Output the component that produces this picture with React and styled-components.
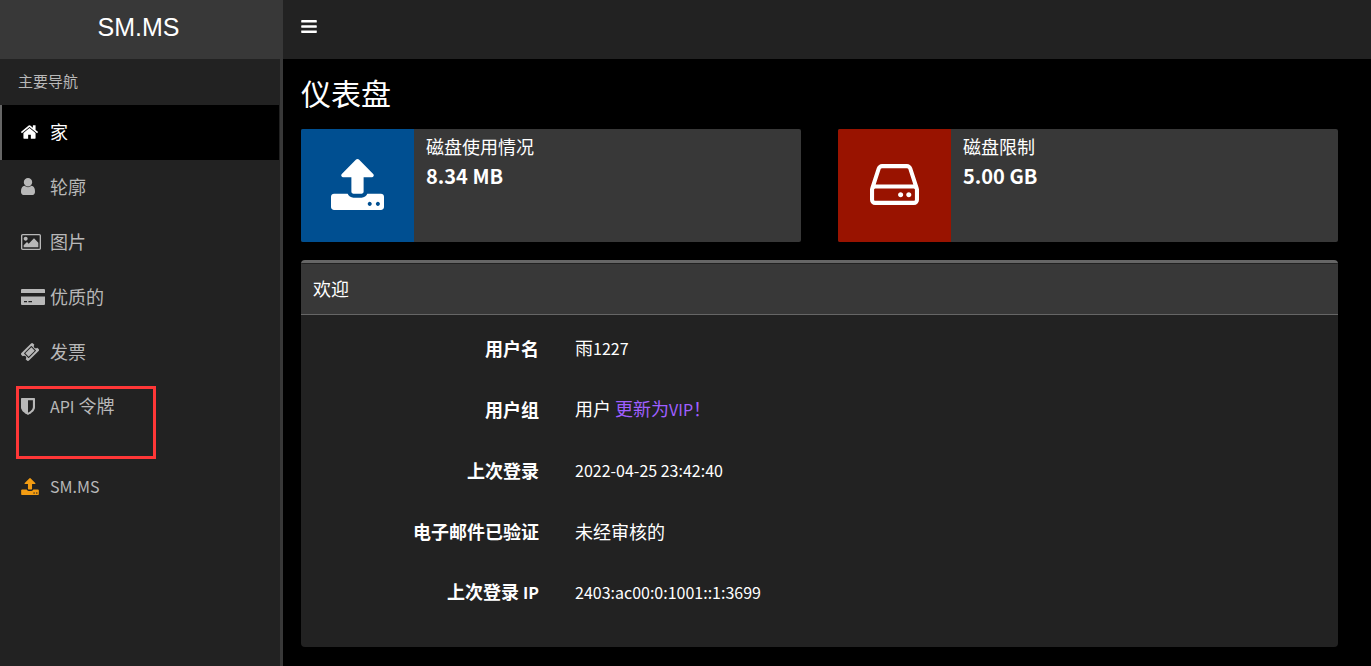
import React from "react";
import styled, { createGlobalStyle } from "styled-components";

const GlobalStyle = createGlobalStyle`
  * { box-sizing: border-box; }
  body {
    margin: 0;
    background: #000;
    color: #fff;
    font-family: "Noto Sans CJK SC", sans-serif;
    font-size: 18px;
    line-height: 26px;
  }
  h1, h2, p, ul, dl, dd { margin: 0; padding: 0; }
`;

const Page = styled.div`
  display: flex;
  flex-direction: column;
  min-height: 100vh;
`;

const Header = styled.header`
  display: flex;
  height: 59px;
  background: #222;
`;

const Logo = styled.a`
  width: 283px;
  padding: 0 24px 0 18px;
  background: #383838;
  color: #fff;
  font-family: "Liberation Sans", Arial, sans-serif;
  font-size: 25px;
  line-height: 55px;
  text-align: center;
  text-decoration: none;
`;

const MenuButton = styled.button`
  display: flex;
  align-items: center;
  padding: 0 18px 6px;
  border: 0;
  background: none;
  color: #fff;
  cursor: pointer;
`;

const Body = styled.div`
  display: flex;
  flex: 1;
`;

const Sidebar = styled.nav`
  width: 283px;
  flex-shrink: 0;
  border-right: 3px solid #383838;
  background: #222;
`;

const NavHeading = styled.h2`
  padding: 9px 18px 11px;
  color: #b8b8b8;
  font-size: 15px;
  font-weight: 400;
`;

const NavList = styled.ul`
  list-style: none;
`;

const NavItem = styled.li`
  position: relative;
  margin-top: ${(p) => (p.$spaced ? 25 : 0)}px;
  padding-right: 1px;
`;

const NavLink = styled.a`
  display: flex;
  align-items: center;
  height: 55px;
  padding: 0 0 2px 19px;
  border-left: 2px solid ${(p) => (p.$active ? "#666" : "transparent")};
  background: ${(p) => (p.$active ? "#000" : "transparent")};
  color: ${(p) => (p.$active ? "#fff" : "#b8b8b8")};
  text-decoration: none;
`;

const NavIcon = styled.span`
  display: flex;
  width: 29px;
  color: ${(p) => p.$color || "inherit"};
`;

const NavText = styled.span`
  padding-bottom: 2px;
`;

const Highlight = styled.span`
  position: absolute;
  top: 6px;
  left: 16px;
  width: 140px;
  height: 73px;
  border: 3px solid #ff3737;
  pointer-events: none;
`;

const Latin = styled.span`
  font-size: 16px;
`;

const Main = styled.main`
  flex: 1;
  min-width: 0;
  padding: 12px 33px 19px 18px;
`;

const Title = styled.h1`
  font-size: 30px;
  font-weight: 400;
  line-height: 42px;
`;

const Stats = styled.div`
  display: grid;
  grid-template-columns: 1fr 1fr;
  gap: 37px;
  margin: 16px 0 18px;
`;

const Stat = styled.section`
  display: flex;
  height: 113px;
  overflow: hidden;
  border-radius: 2px;
  background: #383838;
`;

const StatIcon = styled.div`
  display: flex;
  align-items: center;
  justify-content: center;
  width: 113px;
  padding-bottom: 2px;
  background: ${(p) => p.$color};
`;

const StatText = styled.div`
  padding: 4px 12px;
`;

const StatValue = styled.p`
  font-size: 20px;
  font-weight: 700;
  line-height: 34px;
`;

const Panel = styled.section`
  overflow: hidden;
  border-top: 3px solid #666;
  border-radius: 4px;
  background: #222;
`;

const PanelTitle = styled.h2`
  padding: 11px 12px 13px;
  border-top: 1px solid #222;
  border-bottom: 1px solid #666;
  background: #383838;
  font-size: 18px;
  font-weight: 400;
`;

const Details = styled.dl`
  padding: 2px 13px 25px 0;
`;

const Detail = styled.div`
  display: grid;
  grid-template-columns: 1fr 3fr;
  align-items: center;
  height: 61px;
`;

const Label = styled.dt`
  padding-right: 18px;
  font-weight: 700;
  text-align: right;
`;

const Value = styled.dd`
  && { padding-left: 18px; }
`;

const VipLink = styled.a`
  color: #9f5fff;
  text-decoration: none;
`;

const shapes = {
  bars: {
    box: [128, 256, 1536, 1280],
    d: "M1664 1344v128q0 26-19 45t-45 19h-1408q-26 0-45-19t-19-45v-128q0-26 19-45t45-19h1408q26 0 45 19t19 45zm0-512v128q0 26-19 45t-45 19h-1408q-26 0-45-19t-19-45v-128q0-26 19-45t45-19h1408q26 0 45 19t19 45zm0-512v128q0 26-19 45t-45 19h-1408q-26 0-45-19t-19-45v-128q0-26 19-45t45-19h1408q26 0 45 19t19 45z",
  },
  home: {
    box: [89, 253, 1614, 1283],
    d: "M1472 992v480q0 26-19 45t-45 19h-384v-384h-256v384h-384q-26 0-45-19t-19-45v-480q0-1 .5-3t.5-3l575-474 575 474q1 2 1 6zm223-69l-62 74q-8 9-21 11h-3q-13 0-21-7l-692-577-692 577q-12 8-24 7-13-2-21-11l-62-74q-8-10-7-23.5t11-21.5l719-599q32-26 76-26t76 26l244 204v-195q0-14 9-23t23-9h192q14 0 23 9t9 23v408l219 182q10 8 11 21.5t-7 23.5z",
  },
  user: {
    box: [256, 128, 1280, 1536],
    d: "M1536 1399q0 109-62.5 187t-150.5 78h-854q-88 0-150.5-78t-62.5-187q0-85 8.5-160.5t31.5-152 58.5-131 94-89 134.5-34.5q131 128 313 128t313-128q76 0 134.5 34.5t94 89 58.5 131 31.5 152 8.5 160.5zm-256-887q0 159-112.5 271.5t-271.5 112.5-271.5-112.5-112.5-271.5 112.5-271.5 271.5-112.5 271.5 112.5 112.5 271.5z",
  },
  image: {
    box: [-64, 128, 1920, 1536],
    d: "M576 576q0 80-56 136t-136 56-136-56-56-136 56-136 136-56 136 56 56 136zm1024 384v448h-1408v-192l320-320 160 160 512-512zm96-704h-1600q-13 0-22.5 9.5t-9.5 22.5v1216q0 13 9.5 22.5t22.5 9.5h1600q13 0 22.5-9.5t9.5-22.5v-1216q0-13-9.5-22.5t-22.5-9.5zm160 32v1216q0 66-47 113t-113 47h-1600q-66 0-113-47t-47-113v-1216q0-66 47-113t113-47h1600q66 0 113 47t47 113z",
  },
  card: {
    box: [0, 0, 24, 16],
    d: "M0 4V1Q0 0 1 0H23Q24 0 24 1V4ZM0 7.5H24V15Q24 16 23 16H1Q0 16 0 15ZM3 12V13.2H6V12ZM7.4 12V13.2H11V12Z",
  },
  ticket: {
    box: [54, 54, 1684, 1684],
    d: "M1024 452l316 316-572 572-316-316zm-211 979l618-618q19-19 19-45t-19-45l-362-362q-18-18-45-18t-45 18l-618 618q-19 19-19 45t19 45l362 362q18 18 45 18t45-18zm889-637l-907 908q-37 37-90.5 37t-90.5-37l-126-126q56-56 56-136t-56-136-136-56-136 56l-125-126q-37-37-37-90.5t37-90.5l907-906q37-37 90.5-37t90.5 37l125 125q-56 56-56 136t56 136 136 56 136-56l126 125q37 37 37 90.5t-37 90.5z",
  },
  shield: {
    box: [256, 128, 1280, 1536],
    d: "M1344 960v-640h-448v1137q119-63 213-137 235-184 235-360zm192-768v768q0 86-33.5 170.5t-83 150-118 127.5-126.5 103-121 77.5-89.5 49.5-42.5 20q-12 6-26 6t-26-6q-16-7-42.5-20t-89.5-49.5-121-77.5-126.5-103-118-127.5-83-150-33.5-170.5v-768q0-26 19-45t45-19h1152q26 0 45 19t19 45z",
  },
  upload: {
    box: [64, 64, 1664, 1600],
    d: "M1344 1472q0-26-19-45t-45-19-45 19-19 45 19 45 45 19 45-19 19-45zm256 0q0-26-19-45t-45-19-45 19-19 45 19 45 45 19 45-19 19-45zm128-224v320q0 40-28 68t-68 28h-1472q-40 0-68-28t-28-68v-320q0-40 28-68t68-28h427q21 56 70.5 92t110.5 36h256q61 0 110.5-36t70.5-92h427q40 0 68 28t28 68zm-325-648q-17 40-59 40h-256v448q0 26-19 45t-45 19h-256q-26 0-45-19t-19-45v-448h-256q-42 0-59-40-17-39 14-69l448-448q18-19 45-19t45 19l448 448q31 30 14 69z",
  },
  disk: {
    box: [128, 256, 1536, 1280],
    d: "M1168 1216q0 33-23.5 56.5t-56.5 23.5-56.5-23.5-23.5-56.5 23.5-56.5 56.5-23.5 56.5 23.5 23.5 56.5zm256 0q0 33-23.5 56.5t-56.5 23.5-56.5-23.5-23.5-56.5 23.5-56.5 56.5-23.5 56.5 23.5 23.5 56.5zm112 160v-320q0-13-9.5-22.5t-22.5-9.5h-1216q-13 0-22.5 9.5t-9.5 22.5v320q0 13 9.5 22.5t22.5 9.5h1216q13 0 22.5-9.5t9.5-22.5zm-1230-480h1180l-157-482q-4-13-16-21.5t-26-8.5h-782q-14 0-26 8.5t-16 21.5zm1358 160v320q0 66-47 113t-113 47h-1216q-66 0-113-47t-47-113v-320q0-25 16-75l197-606q17-53 63-86t101-33h782q55 0 101 33t63 86l197 606q16 50 16 75z",
  },
};

function Icon({ name, width }) {
  const { box, d } = shapes[name];
  return (
    <svg
      width={width}
      height={Math.round((width * box[3]) / box[2])}
      viewBox={box.join(" ")}
      fill="currentColor"
      fillRule={name === "card" ? "evenodd" : "nonzero"}
      aria-hidden="true"
    >
      <path d={d} />
    </svg>
  );
}

const navItems = [
  { icon: "home", width: 17, label: "家", active: true },
  { icon: "user", width: 14, label: "轮廓" },
  { icon: "image", width: 20, label: "图片" },
  { icon: "card", width: 24, label: "优质的" },
  { icon: "ticket", width: 18, label: "发票" },
  { icon: "shield", width: 14, label: <><Latin>API</Latin> 令牌</>, marked: true },
  { icon: "upload", width: 18, label: <Latin>SM.MS</Latin>, color: "#f39c12", spaced: true },
];

const details = [
  ["用户名", <>雨<Latin>1227</Latin></>],
  ["用户组", <>用户 <VipLink href="#vip">更新为<Latin>VIP</Latin>！</VipLink></>],
  ["上次登录", <Latin>2022-04-25 23:42:40</Latin>],
  ["电子邮件已验证", "未经审核的"],
  [<>上次登录 <Latin>IP</Latin></>, <Latin>2403:ac00:0:1001::1:3699</Latin>],
];

export default function App() {
  return (
    <Page>
      <GlobalStyle />
      <Header>
        <Logo href="#home">SM.MS</Logo>
        <MenuButton type="button" aria-label="菜单">
          <Icon name="bars" width={16} />
        </MenuButton>
      </Header>
      <Body>
        <Sidebar>
          <NavHeading>主要导航</NavHeading>
          <NavList>
            {navItems.map((item) => (
              <NavItem key={item.icon} $spaced={item.spaced}>
                <NavLink href={`#${item.icon}`} $active={item.active}>
                  <NavIcon $color={item.color}>
                    <Icon name={item.icon} width={item.width} />
                  </NavIcon>
                  <NavText>{item.label}</NavText>
                </NavLink>
                {item.marked && <Highlight />}
              </NavItem>
            ))}
          </NavList>
        </Sidebar>
        <Main>
          <Title>仪表盘</Title>
          <Stats>
            <Stat>
              <StatIcon $color="#004f91"><Icon name="upload" width={53} /></StatIcon>
              <StatText>
                <p>磁盘使用情况</p>
                <StatValue>8.34 MB</StatValue>
              </StatText>
            </Stat>
            <Stat>
              <StatIcon $color="#991300"><Icon name="disk" width={49} /></StatIcon>
              <StatText>
                <p>磁盘限制</p>
                <StatValue>5.00 GB</StatValue>
              </StatText>
            </Stat>
          </Stats>
          <Panel>
            <PanelTitle>欢迎</PanelTitle>
            <Details>
              {details.map(([label, value], i) => (
                <Detail key={i}>
                  <Label>{label}</Label>
                  <Value>{value}</Value>
                </Detail>
              ))}
            </Details>
          </Panel>
        </Main>
      </Body>
    </Page>
  );
}
